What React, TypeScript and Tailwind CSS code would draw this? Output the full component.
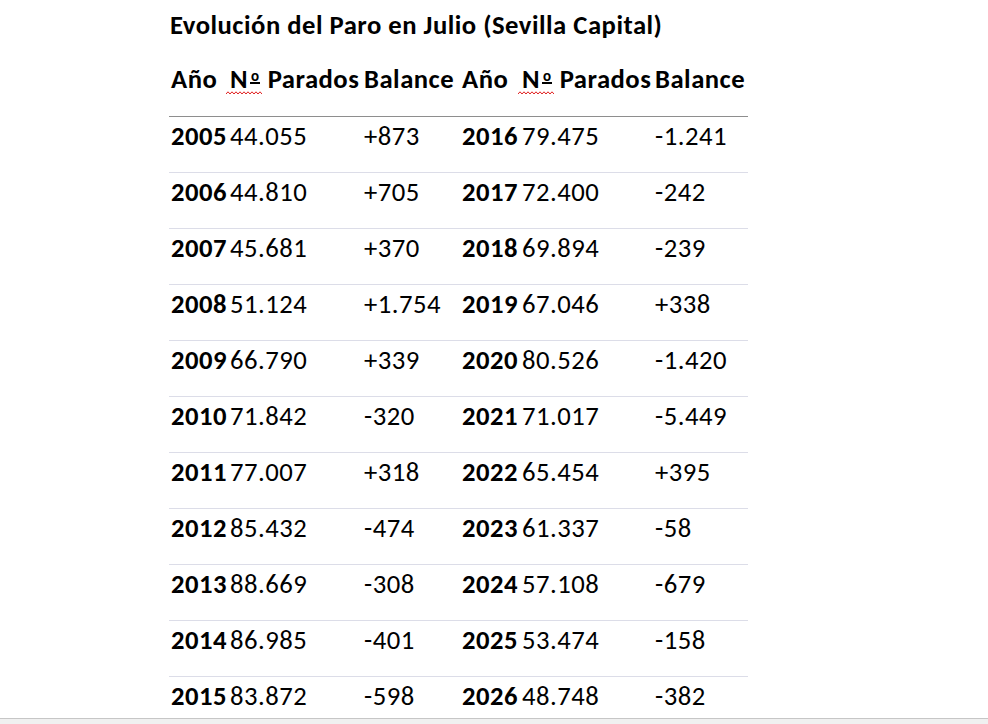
const rows: [string, string, string, string, string, string][] = [
  ["2005", "44.055", "+873", "2016", "79.475", "-1.241"],
  ["2006", "44.810", "+705", "2017", "72.400", "-242"],
  ["2007", "45.681", "+370", "2018", "69.894", "-239"],
  ["2008", "51.124", "+1.754", "2019", "67.046", "+338"],
  ["2009", "66.790", "+339", "2020", "80.526", "-1.420"],
  ["2010", "71.842", "-320", "2021", "71.017", "-5.449"],
  ["2011", "77.007", "+318", "2022", "65.454", "+395"],
  ["2012", "85.432", "-474", "2023", "61.337", "-58"],
  ["2013", "88.669", "-308", "2024", "57.108", "-679"],
  ["2014", "86.985", "-401", "2025", "53.474", "-158"],
  ["2015", "83.872", "-598", "2026", "48.748", "-382"],
];

const grid = "grid grid-cols-[59px_134px_98px_60px_133px_93px]";

const squiggle = (() => {
  let d = "M0 3";
  for (let i = 1; i <= 18; i++) {
    d += ` L${i * 2} ${i % 2 === 1 ? 0.8 : 3}`;
  }
  return d;
})();

function NumHead() {
  return (
    <span className="whitespace-nowrap">
      <span className="relative">
        N
        <span className="inline-block ml-[2px] mr-[1px] px-[1px] pb-[1px] text-[15px] leading-[10px] tracking-normal align-[7px] border-b-2 border-black">
          o
        </span>
        <svg
          className="absolute left-[-4px] top-[28px] w-[36px] h-[4px]"
          viewBox="0 0 36 4"
          fill="none"
        >
          <path d={squiggle} stroke="#e02020" strokeWidth="1" />
        </svg>
      </span>{" "}
      Parados
    </span>
  );
}

export default function App() {
  return (
    <div
      className="h-[724px] w-[988px] overflow-hidden bg-white flex flex-col text-black"
      style={{ fontFamily: 'Carlito, Calibri, "Liberation Sans", sans-serif' }}
    >
      <div className="flex-1 overflow-hidden text-[26.67px] leading-[27px] tracking-[0.5px]">
        <div className="h-[60px] pt-[12px] pl-[170px] font-bold whitespace-nowrap">
          Evolución del Paro en Julio (Sevilla Capital)
        </div>
        <div className="ml-[169px] w-[579px]">
          <div className={`${grid} h-[57px] pt-[6px] pl-[2px] border-b border-[#8e8e8e] font-bold`}>
            <div>Año</div>
            <div><NumHead /></div>
            <div>Balance</div>
            <div>Año</div>
            <div><NumHead /></div>
            <div>Balance</div>
          </div>
          {rows.map((r) => (
            <div key={r[0]} className={`${grid} h-[56px] pt-[6px] pl-[2px] border-b border-[#dcdde8] whitespace-nowrap`}>
              <div className="font-bold">{r[0]}</div>
              <div>{r[1]}</div>
              <div>{r[2]}</div>
              <div className="font-bold">{r[3]}</div>
              <div>{r[4]}</div>
              <div>{r[5]}</div>
            </div>
          ))}
        </div>
      </div>
      <div className="h-[6px] shrink-0 border-t border-[#c6c6c6] bg-[#f0f0f0]" />
    </div>
  );
}
